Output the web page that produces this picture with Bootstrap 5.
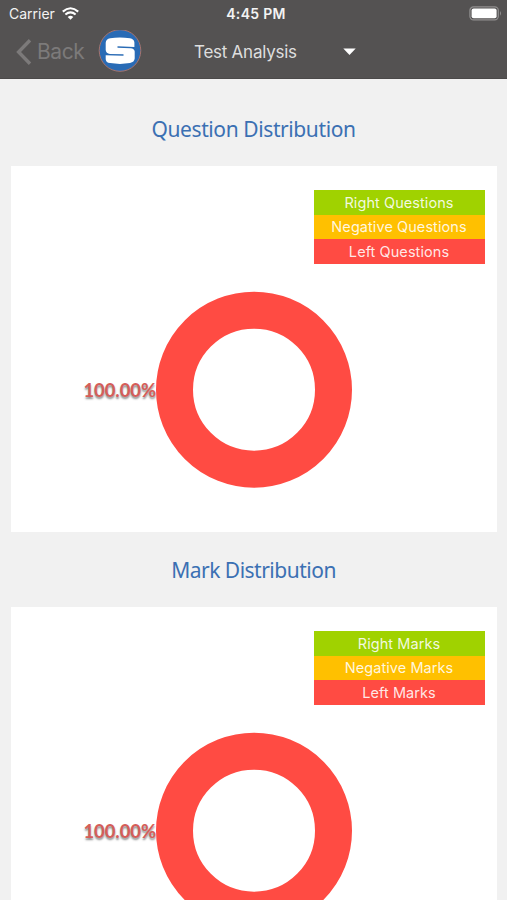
<!DOCTYPE html>
<html lang="en">
<head>
<meta charset="utf-8">
<meta name="viewport" content="width=device-width, initial-scale=1">
<title>Test Analysis</title>
<link href="https://cdn.jsdelivr.net/npm/bootstrap@5.3.0/dist/css/bootstrap.min.css" rel="stylesheet">
<style>
  body { background: #f1f1f1; font-family: Inter, sans-serif; height: 900px; overflow: hidden; }
  .app-header { background: #545252; height: 79px; color: #f3f3f3; border-bottom: 1px solid #4b4949; }
  .status-bar { height: 27px; padding: 0 4px 0 9px; display: grid; grid-template-columns: 1fr auto 1fr; line-height: 27px; }
  .carrier { font-size: 14px; margin-right: 7px; }
  .clock { font-size: 14px; font-weight: 600; letter-spacing: .3px; padding-top: 1px; line-height: 26px; }
  .title-bar { height: 50px; padding-left: 16px; }
  .back-link { color: #7c7a7a; font-size: 21px; width: 82px; letter-spacing: -.4px; }
  .back-link span { margin-left: 5px; }
  .page-title { font-size: 17px; color: #dedede; margin-left: 52px; width: 149px; letter-spacing: -.25px; padding-top: 2px; }
  .section-title { color: #3b70b3; font: 400 21px/28px "Noto Sans", sans-serif; padding: 36px 0 23px; letter-spacing: -.4px; }
  .section-title.following { padding: 24px 0 23px; letter-spacing: -.5px; }
  .chart-panel { background: #fff; height: 366px; margin: 0 10px 0 11px; padding-top: 24px; }
  .legend { width: 171px; margin: 0 12px 28px auto; font-size: 14.5px; text-align: center; }
  .legend li { height: 24.5px; line-height: 25px; letter-spacing: .07px; padding-right: 1px; color: rgba(255,255,255,.88); }
  .legend .tone-negative { line-height: 24px; }
  .tone-right { background: #a0d200; }
  .tone-negative { background: #ffc000; }
  .tone-left { background: #ff4b43; }
  .ring-row { display: grid; grid-template-columns: 1fr 196px 1fr; }
  .ring-value { font: 700 18.5px/24px Lato, sans-serif; letter-spacing: -.1px; color: #d65d59; text-shadow: 0 2px 2px rgba(60,60,60,.6); }
</style>
</head>
<body>
<header class="app-header">
  <div class="status-bar">
    <div class="d-flex align-items-center"><span class="carrier">Carrier</span>
      <svg width="17" height="13" viewBox="0 0 17 13" fill="none" stroke="#fff" stroke-width="2.1"><path d="M.8 4.6Q8.5-2.1 16.2 4.6M3.4 7.5Q8.5 3.1 13.6 7.5"/><path d="M5.7 9.9Q8.5 7.6 11.3 9.9L8.5 12.7Z" fill="#fff" stroke="none"/></svg>
    </div>
    <span class="clock">4:45 PM</span>
    <div class="d-flex align-items-center justify-content-end">
      <svg width="34" height="15" viewBox="0 0 34 15"><rect x=".9" y=".9" width="28.4" height="13" rx="3.6" fill="none" stroke="#918f8f" stroke-width="1.2"/><rect x="2.6" y="2.5" width="25" height="9.8" rx="2" fill="#fff"/><path d="M31 5.1q2 2.3 0 4.6z" fill="#918f8f"/></svg>
    </div>
  </div>
  <div class="title-bar d-flex align-items-center">
    <a class="back-link d-flex align-items-center text-decoration-none" href="#">
      <svg width="16" height="26" viewBox="0 0 16 26" fill="none" stroke="#7c7a7a" stroke-width="3.4"><path d="M14 1.3 2.6 13 14 24.7"/></svg>
      <span>Back</span>
    </a>
    <svg width="44" height="44" viewBox="0 0 44 44"><circle cx="22" cy="20.5" r="20.8" fill="#296bb5" stroke="#a5736d" stroke-width="1"/><path d="M36.4 16.4V12.4Q36 9 32 8.300Q21.500 6.500 12.200 8.300Q8 9.200 7.700 12.800V20Q8 23.600 12 23.900L25.500 24.200V25.700L7.700 25.200V29.200Q8 32.500 12 33.100Q22 34.700 32 33.100Q36.400 32.100 36.700 28.600V21.500Q36.400 18.500 32.500 18.200L19.500 17.700V16.200L36.400 16.900Z" fill="#fff"/></svg>
    <span class="page-title">Test Analysis</span>
    <svg width="13" height="8" viewBox="0 0 13 8"><path d="M.3.6h12.4L6.500 7z" fill="#fff"/></svg>
  </div>
</header>
<main>
  <h2 class="section-title text-center m-0">Question Distribution</h2>
  <section class="chart-panel">
    <ul class="legend list-unstyled">
      <li class="tone-right">Right Questions</li>
      <li class="tone-negative">Negative Questions</li>
      <li class="tone-left">Left Questions</li>
    </ul>
    <div class="ring-row align-items-center">
      <span class="ring-value text-end">100.00%</span>
      <svg width="196" height="196" viewBox="0 0.3 196 196" overflow="visible"><circle cx="98" cy="98" r="79.5" fill="none" stroke="#ff4b43" stroke-width="37"/></svg>
    </div>
  </section>
  <h2 class="section-title following text-center m-0">Mark Distribution</h2>
  <section class="chart-panel">
    <ul class="legend list-unstyled">
      <li class="tone-right">Right Marks</li>
      <li class="tone-negative">Negative Marks</li>
      <li class="tone-left">Left Marks</li>
    </ul>
    <div class="ring-row align-items-center">
      <span class="ring-value text-end">100.00%</span>
      <svg width="196" height="196" viewBox="0 0.3 196 196" overflow="visible"><circle cx="98" cy="98" r="79.5" fill="none" stroke="#ff4b43" stroke-width="37"/></svg>
    </div>
  </section>
</main>
<script src="https://cdn.jsdelivr.net/npm/bootstrap@5.3.0/dist/js/bootstrap.bundle.min.js"></script>
</body>
</html>
